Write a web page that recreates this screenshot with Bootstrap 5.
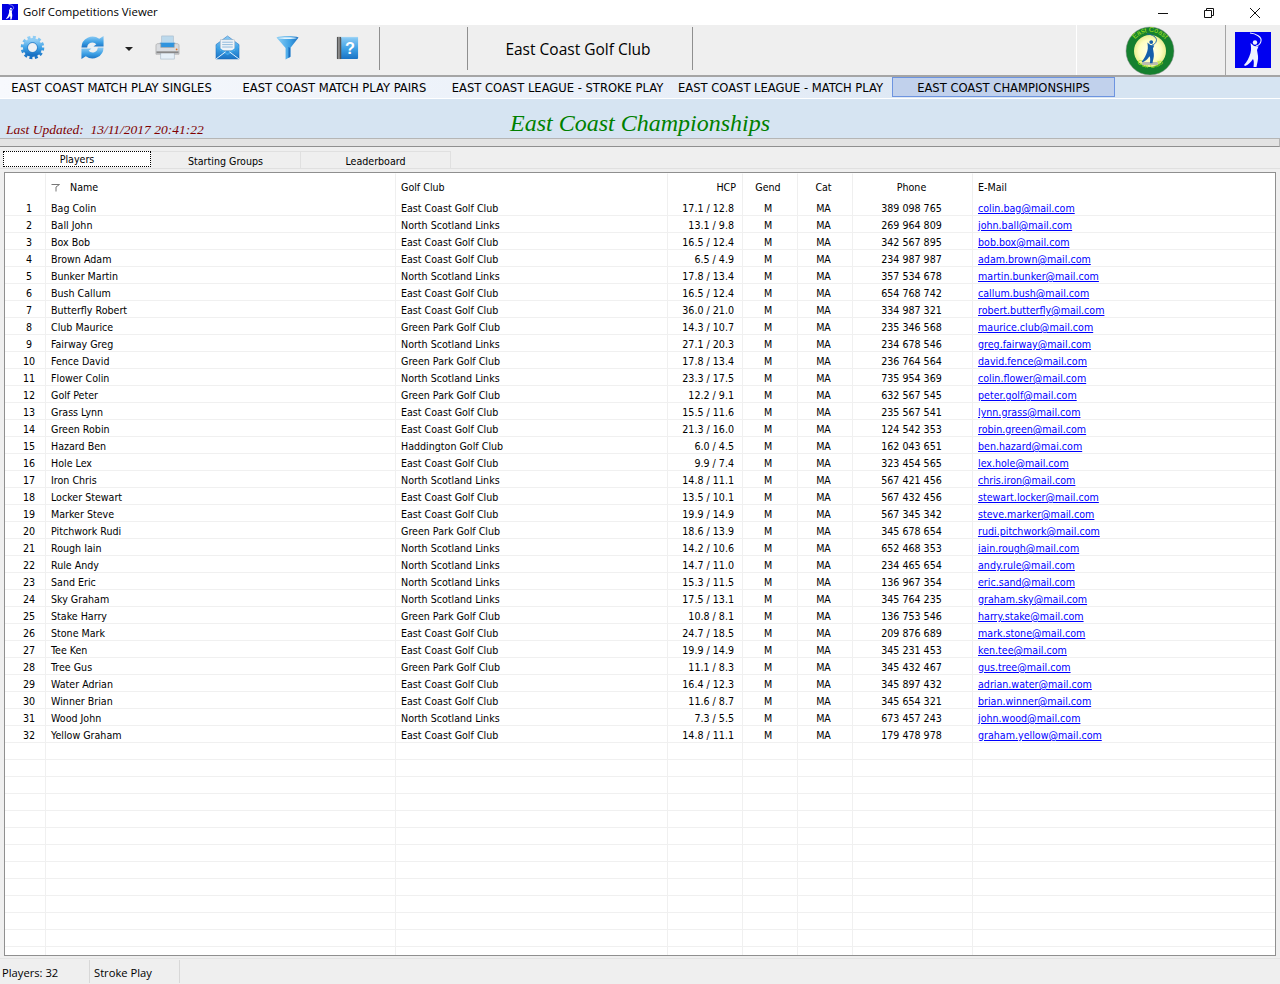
<!DOCTYPE html>
<html lang="en">
<head>
<meta charset="utf-8">
<title>Golf Competitions Viewer</title>
<link href="https://cdn.jsdelivr.net/npm/bootstrap@5.3.0/dist/css/bootstrap.min.css" rel="stylesheet">
<style>
html,body{height:984px;overflow:hidden}
body{background:#efefef;color:#000;font-family:"DejaVu Sans Condensed","Open Sans",sans-serif;font-size:10.6px;line-height:16px}
.titlebar{height:25px;background:#fff;font-family:"Open Sans",sans-serif;font-size:11.4px;padding-bottom:1px}
.titlebar .app{width:16px;height:16px;margin:0 5px 0 2px}
.winctl{margin-right:2px}
.winbtn{width:46px}
.toolbar{height:52px;background:#efefef;border-bottom:2px solid #a5a5a5}
.tool{width:60px;height:50px;padding:0 0 5px;border:0;border-radius:0}
.tool svg{width:25px;height:25px}
.tool-first{margin-left:2px}
.tool-shift{padding-right:3px}
.caret-btn{width:17px;font-size:0;padding:0 3px 2px 0}
.caret{width:0;height:0;border-left:4px solid transparent;border-right:4px solid transparent;border-top:4px solid #222}
.sep{width:1px;height:43px;background:#8f8f8f;margin-top:2px}
.sp1{width:87px}
.club{width:224px;font-size:15.5px;font-family:"Open Sans",sans-serif;padding:0 4px 2px 0}
.spacer-r{width:383px}
.logo-cell{width:149px;border-left:1px solid #fff;height:50px}
.logo-cell svg.logo{width:50px;height:50px;margin-top:1px;margin-right:2px}
.brand-cell{border-left:1px solid #a5a5a5;height:50px;flex:1}
.brand-cell svg{width:36px;height:36px;margin-left:9px}
.menubar{height:22px;background:linear-gradient(90deg,#f7f9fd 0%,#e6edf7 60%,#d6e4f2 80%);border-bottom:1px solid #fff;font-size:12.85px}
.menubar .item{width:223px;height:20px;line-height:20px;text-align:center;color:#000;text-decoration:none;border:1px solid transparent;white-space:nowrap}
.menubar .item.active{background:#c1d1ec;border-color:#6d94e0}
.banner{height:40px;background:#d6e4f2;border-bottom:1px solid #b5b5b5}
.updated{left:6px;top:23px;font:italic 13.5px/16px "Liberation Serif",serif;color:#800000}
.heading{font:italic 24px/28px "Liberation Serif",serif;color:#008000;margin:0;padding-top:10px}
.strip{height:8px;background:#e3e3e3;border-bottom:1px solid #8f8f8f;border-right:1px solid #b5b5b5}
.tabs{height:22px;padding:4px 0 0 3px;border-bottom:1px solid #e0e0e0}
.tabs .tab{width:150px;height:18px;line-height:19px;text-align:center;border:1px solid #e0e0e0;border-left:0;border-bottom:0;color:#000;text-decoration:none}
.tabs .tab.current{width:148px;height:16px;line-height:14px;background:#fff;border:1px dotted #000}
.frame{margin:3px 4px 0;height:784px;border:1px solid #8f8f8f;background:#fff;overflow:hidden}
.grid{table-layout:fixed;width:1270px;border-collapse:separate;border-spacing:0;margin:0;--bs-table-bg:#fff}
.grid th,.grid td{padding:0;border:0;font-weight:400;white-space:nowrap;overflow:hidden;color:#000;box-shadow:none}
.grid th{height:26px;border-right:1px solid #efefef;border-top:1px solid #fff;vertical-align:middle}
.grid td{height:17px;padding-top:2px;line-height:14px;border-right:1px solid #f0f0f0;border-bottom:1px solid #f0f0f0;vertical-align:middle}
.grid td:last-child,.grid th:last-child{border-right:0}
.grid .tail td{height:8px;padding-top:0;border-bottom:0;line-height:8px}
.c0{width:41px}.c1{width:350px}.c2{width:272px}.c3{width:75px}.c4{width:55px}.c5{width:55px}.c6{width:120px}
.grid td:nth-child(1){text-align:center;padding-left:8px}
.grid td:nth-child(2),.grid th:nth-child(2){padding-left:5px}
.grid td:nth-child(3),.grid th:nth-child(3){padding-left:5px}
.grid td:nth-child(4){text-align:right;padding-right:8px}
.grid th:nth-child(4){text-align:right;padding-right:6px}
.grid td:nth-child(5),.grid th:nth-child(5){text-align:center;padding-right:4px}
.grid td:nth-child(6),.grid th:nth-child(6){text-align:center;padding-right:3px}
.grid td:nth-child(7),.grid th:nth-child(7){text-align:center;padding-right:2px}
.grid td:nth-child(8),.grid th:nth-child(8){padding-left:5px}
.grid a{color:#00f;text-decoration:underline}
.sort{width:9px;height:8px;margin:0 10px 0 0;vertical-align:-1px}
.statusbar{height:25px;margin-top:2px;border-top:1px solid #e4e4e4;font-family:"Open Sans",sans-serif;font-size:11.2px}
.statusbar>div{height:23px;line-height:25px;margin-top:1px;border-right:1px solid #d8d8d8}
.s1{width:90px;padding-left:2px}.s2{width:90px;padding-left:4px}
</style>
</head>
<body>
<svg width="0" height="0" class="position-absolute">
<defs>
<linearGradient id="bl" x1="0" y1="0" x2="0" y2="1"><stop offset="0" stop-color="#8fcdf5"/><stop offset=".55" stop-color="#3c9fe4"/><stop offset="1" stop-color="#1a72c4"/></linearGradient>
<linearGradient id="fn" x1="0" y1="0" x2="1" y2="0"><stop offset="0" stop-color="#8fd0f5"/><stop offset=".6" stop-color="#3fa3e6"/><stop offset="1" stop-color="#1b6fc0"/></linearGradient>
<radialGradient id="cream"><stop offset="0" stop-color="#fffff0"/><stop offset=".7" stop-color="#fdfdc0"/><stop offset="1" stop-color="#e9ee90"/></radialGradient>
<symbol id="golfer" viewBox="0 0 36 36">
<path d="M15 1C21 1.500 27 5 26 9C25.500 12 23 13.500 21 14" fill="none" stroke="currentColor" stroke-width="1.100"/>
<circle cx="20" cy="10.500" r="2.200" fill="currentColor"/>
<path d="M15.500 11L19 14L23.500 14.500L22 18L23 24C23.500 28 22 31 21.500 35L18.500 35C19 31 19 29 18 27C16 30 13 33 10 34L9 33C12 30 14 26 15.500 21C16.500 17 16 14 15.500 11Z" fill="currentColor"/>
</symbol>
</defs>
</svg>
<div class="titlebar d-flex align-items-center">
  <svg class="app" viewBox="0 0 16 16"><rect width="16" height="16" fill="#0000e0"/><use href="#golfer" width="16" height="16" color="#fff"/></svg>
  <span>Golf Competitions Viewer</span>
  <div class="ms-auto d-flex winctl">
    <div class="winbtn text-center"><svg width="12" height="12" viewBox="0 0 12 12"><path d="M1 6.500H11" stroke="#111" fill="none"/></svg></div>
    <div class="winbtn text-center"><svg width="12" height="12" viewBox="0 0 12 12"><path d="M1.500 3.500H8.500V10.500H1.500ZM3.500 3.500V1.500H10.500V8.500H8.500" stroke="#111" fill="none"/></svg></div>
    <div class="winbtn text-center"><svg width="12" height="12" viewBox="0 0 12 12"><path d="M1 1L11 11M11 1L1 11" stroke="#111" fill="none"/></svg></div>
  </div>
</div>
<div class="toolbar d-flex align-items-start">
  <button class="btn tool tool-first d-flex align-items-center justify-content-center" aria-label="Settings"><svg viewBox="0 0 26 26"><circle cx="13" cy="13" r="10.500" fill="none" stroke="url(#bl)" stroke-width="3.500" stroke-dasharray="3 2.500"/><circle cx="13" cy="13" r="7.500" fill="none" stroke="url(#bl)" stroke-width="5"/><circle cx="13" cy="13" r="5" fill="none" stroke="#1a72c4" stroke-width="1"/><circle cx="13" cy="13" r="4.500" fill="#eef1f4"/></svg></button>
  <button class="btn tool d-flex align-items-center justify-content-center" aria-label="Refresh"><svg viewBox="0 0 26 26"><path d="M1.500 13A11.500 11.500 0 0 1 20 4L24.500 1V12H14L17 9.500A5.500 5.500 0 0 0 7.500 13Z" fill="url(#bl)"/><path d="M24.500 13A11.500 11.500 0 0 1 6 22L1.500 25V14H12L9 16.500A5.500 5.500 0 0 0 18.500 13Z" fill="url(#bl)"/><path d="M8 12.500L15 9.500L13 12.500H8ZM18 13.500L11 16.500L13 13.500H18Z" fill="#dff2fd"/></svg></button>
  <button class="btn tool caret-btn d-flex align-items-center justify-content-center" aria-label="More"><span class="caret"></span></button>
  <button class="btn tool tool-shift d-flex align-items-center justify-content-center" aria-label="Print"><svg viewBox="0 0 26 26"><rect x="7" y="1" width="12" height="9" fill="#bcd9ec" stroke="#9fb6c8" stroke-width=".6"/><path d="M5 8H21V13H5Z" fill="#2f94de"/><path d="M1 11C1 9.500 2 9 3 9H6V13H20V9H23C24 9 25 9.500 25 11V20H1Z" fill="#d9dce0" stroke="#9a9a9a" stroke-width=".6"/><rect x="6" y="18" width="14" height="7" fill="#e6f0f8" stroke="#a0b4c4" stroke-width=".6"/><rect x="1.500" y="17" width="23" height="2" fill="#888"/><circle cx="22.500" cy="15" r=".9" fill="#e8701a"/></svg></button>
  <button class="btn tool tool-shift d-flex align-items-center justify-content-center" aria-label="E-mail"><svg viewBox="0 0 26 26"><path d="M1 10L13 1L25 10V25H1Z" fill="url(#bl)" stroke="#1467b8" stroke-width=".5"/><rect x="5.500" y="5" width="15" height="11" fill="#eef3f8" stroke="#9fb0c0" stroke-width=".5"/><path d="M7.500 7.500H18.500M7.500 10H18.500M7.500 12.500H18.500" stroke="#8fb8dc"/><path d="M1 11L13 19L25 11V13L13 21L1 13Z" fill="#3fa3e6"/><path d="M1 25L11 17.500M25 25L15 17.500" stroke="#e9f6ff" stroke-width="1"/></svg></button>
  <button class="btn tool tool-shift d-flex align-items-center justify-content-center" aria-label="Filter"><svg viewBox="0 0 26 26"><path d="M1.500 2.500C6 1 20 1 24.500 2.500L16 13.500V22.500L11 25.500V13.500Z" fill="url(#fn)"/><path d="M3 3C7 4.500 19 4.500 23 3C19 2 7 2 3 3Z" fill="#e3f4fd"/><path d="M14 12.500L16 13.500V22.500L14 24Z" fill="#1b6fc0"/></svg></button>
  <button class="btn tool tool-shift d-flex align-items-center justify-content-center" aria-label="Help"><svg viewBox="0 0 26 26"><rect x="2" y="2" width="22" height="23" rx="1" fill="url(#bl)"/><rect x="2" y="2" width="4.500" height="23" fill="#555"/><rect x="3.500" y="2" width="1.200" height="23" fill="#aaa"/><rect x="6.500" y="2" width="17.500" height="1.200" fill="#9ad2f5"/><text x="15.500" y="20" text-anchor="middle" font-family="Liberation Sans,sans-serif" font-weight="700" font-size="17" fill="#fff">?</text></svg></button>
  <div class="sep"></div>
  <div class="sp1"></div>
  <div class="sep"></div>
  <div class="club d-flex align-items-center justify-content-center h-100">East Coast Golf Club</div>
  <div class="sep"></div>
  <div class="spacer-r"></div>
  <div class="logo-cell d-flex justify-content-center">
    <svg class="logo" viewBox="0 0 50 50"><circle cx="25" cy="25" r="24" fill="#15802f"/><circle cx="25" cy="25" r="24" fill="none" stroke="#8f8f8f" stroke-width=".5"/><circle cx="25" cy="25" r="16" fill="url(#cream)"/><path id="arcT" d="M6 25A19 19 0 0 1 44 25" fill="none"/><path id="arcB" d="M8 31A18.500 18.500 0 0 0 42 31" fill="none"/><text font-family="Liberation Sans,sans-serif" font-size="7" fill="#a5e51c" text-anchor="middle"><textPath href="#arcT" startOffset="50%">East Coast</textPath></text><text font-family="Liberation Sans,sans-serif" font-size="7" fill="#a5e51c" text-anchor="middle"><textPath href="#arcB" startOffset="50%">Golf Club</textPath></text><rect x="17" y="36" width="16" height="3" rx="1" fill="#bdbdb0"/><use href="#golfer" x="9" y="7" width="31" height="31" color="#1560ab"/></svg>
  </div>
  <div class="brand-cell d-flex align-items-center">
    <svg viewBox="0 0 36 36"><rect width="36" height="36" fill="#0000f0"/><use href="#golfer" width="36" height="36" color="#eef2ff"/></svg>
  </div>
</div>
<nav class="menubar d-flex">
  <a class="item" href="#">EAST COAST MATCH PLAY SINGLES</a>
  <a class="item" href="#">EAST COAST MATCH PLAY PAIRS</a>
  <a class="item" href="#">EAST COAST LEAGUE - STROKE PLAY</a>
  <a class="item" href="#">EAST COAST LEAGUE - MATCH PLAY</a>
  <a class="item active" href="#">EAST COAST CHAMPIONSHIPS</a>
</nav>
<div class="banner position-relative text-center">
  <span class="updated position-absolute">Last Updated:&nbsp; 13/11/2017 20:41:22</span>
  <h1 class="heading">East Coast Championships</h1>
</div>
<div class="strip"></div>
<div class="tabs d-flex align-items-start">
  <a class="tab current" href="#">Players</a>
  <a class="tab" href="#">Starting Groups</a>
  <a class="tab" href="#">Leaderboard</a>
</div>
<div class="frame">
<table class="table grid">
<colgroup><col class="c0"><col class="c1"><col class="c2"><col class="c3"><col class="c4"><col class="c5"><col class="c6"><col></colgroup>
<thead><tr><th></th><th><svg class="sort" viewBox="0 0 9 8"><path d="M.5 .5H8.500L5 3V7.500" fill="none" stroke="#777"/></svg>Name</th><th>Golf Club</th><th>HCP</th><th>Gend</th><th>Cat</th><th>Phone</th><th>E-Mail</th></tr></thead>
<tbody>
<tr><td>1</td><td>Bag Colin</td><td>East Coast Golf Club</td><td>17.1 / 12.8</td><td>M</td><td>MA</td><td>389 098 765</td><td><a href="#">colin.bag@mail.com</a></td></tr>
<tr><td>2</td><td>Ball John</td><td>North Scotland Links</td><td>13.1 / 9.8</td><td>M</td><td>MA</td><td>269 964 809</td><td><a href="#">john.ball@mail.com</a></td></tr>
<tr><td>3</td><td>Box Bob</td><td>East Coast Golf Club</td><td>16.5 / 12.4</td><td>M</td><td>MA</td><td>342 567 895</td><td><a href="#">bob.box@mail.com</a></td></tr>
<tr><td>4</td><td>Brown Adam</td><td>East Coast Golf Club</td><td>6.5 / 4.9</td><td>M</td><td>MA</td><td>234 987 987</td><td><a href="#">adam.brown@mail.com</a></td></tr>
<tr><td>5</td><td>Bunker Martin</td><td>North Scotland Links</td><td>17.8 / 13.4</td><td>M</td><td>MA</td><td>357 534 678</td><td><a href="#">martin.bunker@mail.com</a></td></tr>
<tr><td>6</td><td>Bush Callum</td><td>East Coast Golf Club</td><td>16.5 / 12.4</td><td>M</td><td>MA</td><td>654 768 742</td><td><a href="#">callum.bush@mail.com</a></td></tr>
<tr><td>7</td><td>Butterfly Robert</td><td>East Coast Golf Club</td><td>36.0 / 21.0</td><td>M</td><td>MA</td><td>334 987 321</td><td><a href="#">robert.butterfly@mail.com</a></td></tr>
<tr><td>8</td><td>Club Maurice</td><td>Green Park Golf Club</td><td>14.3 / 10.7</td><td>M</td><td>MA</td><td>235 346 568</td><td><a href="#">maurice.club@mail.com</a></td></tr>
<tr><td>9</td><td>Fairway Greg</td><td>North Scotland Links</td><td>27.1 / 20.3</td><td>M</td><td>MA</td><td>234 678 546</td><td><a href="#">greg.fairway@mail.com</a></td></tr>
<tr><td>10</td><td>Fence David</td><td>Green Park Golf Club</td><td>17.8 / 13.4</td><td>M</td><td>MA</td><td>236 764 564</td><td><a href="#">david.fence@mail.com</a></td></tr>
<tr><td>11</td><td>Flower Colin</td><td>North Scotland Links</td><td>23.3 / 17.5</td><td>M</td><td>MA</td><td>735 954 369</td><td><a href="#">colin.flower@mail.com</a></td></tr>
<tr><td>12</td><td>Golf Peter</td><td>Green Park Golf Club</td><td>12.2 / 9.1</td><td>M</td><td>MA</td><td>632 567 545</td><td><a href="#">peter.golf@mail.com</a></td></tr>
<tr><td>13</td><td>Grass Lynn</td><td>East Coast Golf Club</td><td>15.5 / 11.6</td><td>M</td><td>MA</td><td>235 567 541</td><td><a href="#">lynn.grass@mail.com</a></td></tr>
<tr><td>14</td><td>Green Robin</td><td>East Coast Golf Club</td><td>21.3 / 16.0</td><td>M</td><td>MA</td><td>124 542 353</td><td><a href="#">robin.green@mail.com</a></td></tr>
<tr><td>15</td><td>Hazard Ben</td><td>Haddington Golf Club</td><td>6.0 / 4.5</td><td>M</td><td>MA</td><td>162 043 651</td><td><a href="#">ben.hazard@mai.com</a></td></tr>
<tr><td>16</td><td>Hole Lex</td><td>East Coast Golf Club</td><td>9.9 / 7.4</td><td>M</td><td>MA</td><td>323 454 565</td><td><a href="#">lex.hole@mail.com</a></td></tr>
<tr><td>17</td><td>Iron Chris</td><td>North Scotland Links</td><td>14.8 / 11.1</td><td>M</td><td>MA</td><td>567 421 456</td><td><a href="#">chris.iron@mail.com</a></td></tr>
<tr><td>18</td><td>Locker Stewart</td><td>East Coast Golf Club</td><td>13.5 / 10.1</td><td>M</td><td>MA</td><td>567 432 456</td><td><a href="#">stewart.locker@mail.com</a></td></tr>
<tr><td>19</td><td>Marker Steve</td><td>East Coast Golf Club</td><td>19.9 / 14.9</td><td>M</td><td>MA</td><td>567 345 342</td><td><a href="#">steve.marker@mail.com</a></td></tr>
<tr><td>20</td><td>Pitchwork Rudi</td><td>Green Park Golf Club</td><td>18.6 / 13.9</td><td>M</td><td>MA</td><td>345 678 654</td><td><a href="#">rudi.pitchwork@mail.com</a></td></tr>
<tr><td>21</td><td>Rough Iain</td><td>North Scotland Links</td><td>14.2 / 10.6</td><td>M</td><td>MA</td><td>652 468 353</td><td><a href="#">iain.rough@mail.com</a></td></tr>
<tr><td>22</td><td>Rule Andy</td><td>North Scotland Links</td><td>14.7 / 11.0</td><td>M</td><td>MA</td><td>234 465 654</td><td><a href="#">andy.rule@mail.com</a></td></tr>
<tr><td>23</td><td>Sand Eric</td><td>North Scotland Links</td><td>15.3 / 11.5</td><td>M</td><td>MA</td><td>136 967 354</td><td><a href="#">eric.sand@mail.com</a></td></tr>
<tr><td>24</td><td>Sky Graham</td><td>North Scotland Links</td><td>17.5 / 13.1</td><td>M</td><td>MA</td><td>345 764 235</td><td><a href="#">graham.sky@mail.com</a></td></tr>
<tr><td>25</td><td>Stake Harry</td><td>Green Park Golf Club</td><td>10.8 / 8.1</td><td>M</td><td>MA</td><td>136 753 546</td><td><a href="#">harry.stake@mail.com</a></td></tr>
<tr><td>26</td><td>Stone Mark</td><td>East Coast Golf Club</td><td>24.7 / 18.5</td><td>M</td><td>MA</td><td>209 876 689</td><td><a href="#">mark.stone@mail.com</a></td></tr>
<tr><td>27</td><td>Tee Ken</td><td>East Coast Golf Club</td><td>19.9 / 14.9</td><td>M</td><td>MA</td><td>345 231 453</td><td><a href="#">ken.tee@mail.com</a></td></tr>
<tr><td>28</td><td>Tree Gus</td><td>Green Park Golf Club</td><td>11.1 / 8.3</td><td>M</td><td>MA</td><td>345 432 467</td><td><a href="#">gus.tree@mail.com</a></td></tr>
<tr><td>29</td><td>Water Adrian</td><td>East Coast Golf Club</td><td>16.4 / 12.3</td><td>M</td><td>MA</td><td>345 897 432</td><td><a href="#">adrian.water@mail.com</a></td></tr>
<tr><td>30</td><td>Winner Brian</td><td>East Coast Golf Club</td><td>11.6 / 8.7</td><td>M</td><td>MA</td><td>345 654 321</td><td><a href="#">brian.winner@mail.com</a></td></tr>
<tr><td>31</td><td>Wood John</td><td>North Scotland Links</td><td>7.3 / 5.5</td><td>M</td><td>MA</td><td>673 457 243</td><td><a href="#">john.wood@mail.com</a></td></tr>
<tr><td>32</td><td>Yellow Graham</td><td>East Coast Golf Club</td><td>14.8 / 11.1</td><td>M</td><td>MA</td><td>179 478 978</td><td><a href="#">graham.yellow@mail.com</a></td></tr>
<tr><td></td><td></td><td></td><td></td><td></td><td></td><td></td><td></td></tr>
<tr><td></td><td></td><td></td><td></td><td></td><td></td><td></td><td></td></tr>
<tr><td></td><td></td><td></td><td></td><td></td><td></td><td></td><td></td></tr>
<tr><td></td><td></td><td></td><td></td><td></td><td></td><td></td><td></td></tr>
<tr><td></td><td></td><td></td><td></td><td></td><td></td><td></td><td></td></tr>
<tr><td></td><td></td><td></td><td></td><td></td><td></td><td></td><td></td></tr>
<tr><td></td><td></td><td></td><td></td><td></td><td></td><td></td><td></td></tr>
<tr><td></td><td></td><td></td><td></td><td></td><td></td><td></td><td></td></tr>
<tr><td></td><td></td><td></td><td></td><td></td><td></td><td></td><td></td></tr>
<tr><td></td><td></td><td></td><td></td><td></td><td></td><td></td><td></td></tr>
<tr><td></td><td></td><td></td><td></td><td></td><td></td><td></td><td></td></tr>
<tr><td></td><td></td><td></td><td></td><td></td><td></td><td></td><td></td></tr>
<tr class="tail"><td></td><td></td><td></td><td></td><td></td><td></td><td></td><td></td></tr>
</tbody>
</table>
</div>
<div class="statusbar d-flex">
  <div class="s1">Players: 32</div>
  <div class="s2">Stroke Play</div>
</div>
<script src="https://cdn.jsdelivr.net/npm/bootstrap@5.3.0/dist/js/bootstrap.bundle.min.js"></script>
</body>
</html>
